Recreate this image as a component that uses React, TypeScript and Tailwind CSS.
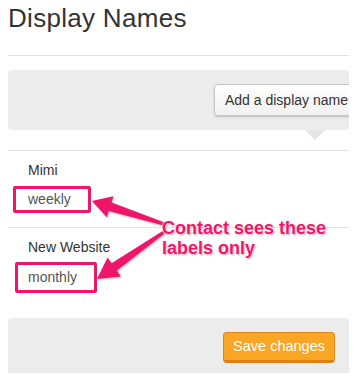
import React from 'react';

const PINK = '#ef156b';

// builds a tapered arrow polygon from tail to tip
function arrowPoints(
  tx: number, ty: number, hx: number, hy: number,
  headLen: number, headW: number, w0: number, w1: number
) {
  const dx = hx - tx;
  const dy = hy - ty;
  const len = Math.sqrt(dx * dx + dy * dy);
  const ux = dx / len;
  const uy = dy / len;
  const nx = -uy;
  const ny = ux;
  const bx = hx - ux * headLen;
  const by = hy - uy * headLen;
  const pts = [
    [tx + (nx * w0) / 2, ty + (ny * w0) / 2],
    [bx + (nx * w1) / 2, by + (ny * w1) / 2],
    [bx + (nx * headW) / 2, by + (ny * headW) / 2],
    [hx, hy],
    [bx - (nx * headW) / 2, by - (ny * headW) / 2],
    [bx - (nx * w1) / 2, by - (ny * w1) / 2],
    [tx - (nx * w0) / 2, ty - (ny * w0) / 2],
  ];
  return pts.map((p) => `${p[0].toFixed(1)},${p[1].toFixed(1)}`).join(' ');
}

export default function App() {
  return (
    <div className="relative w-[361px] h-[388px] bg-white overflow-hidden font-['Liberation_Sans',Arial,sans-serif]">
      <div className="ml-2 w-[341px] overflow-hidden">
        {/* Title */}
        <h1 className="pt-[3px] text-[26px] leading-[30px] tracking-[0.3px] text-[#333]">
          Display Names
        </h1>
        <div className="mt-[22px] border-t border-[#e3e3e3]" />

        {/* Add panel */}
        <div className="mt-[14px] h-[60px] rounded-[4px] bg-[#ececec] pl-[206px] pt-[14px]">
          <button className="h-[32px] whitespace-nowrap rounded-[4px] border border-[#c6c6c6] bg-gradient-to-b from-white to-[#f1f1f1] pl-[10px] pr-[12px] text-[14px] text-[#333] shadow-[0_1px_2px_rgba(0,0,0,0.2)]">
            Add a display name
          </button>
        </div>
        <div className="ml-[297px] h-0 w-0 border-l-[10px] border-r-[10px] border-t-[10px] border-l-transparent border-r-transparent border-t-[#e4e4e4]" />

        {/* Rows */}
        <div className="mt-[10px] border-t border-[#e3e3e3]">
          <div className="pl-[20px] pt-[9px] text-[14px] leading-[20px] text-[#333]">Mimi</div>
          <div className="mt-[6px] ml-[5px] flex h-[27px] w-[78px] items-center rounded-[2px] border-[3px] border-[#ef156b] pl-[12px] text-[14px] text-[#555]">
            weekly
          </div>
        </div>
        <div className="mt-[14px] border-t border-[#e3e3e3]">
          <div className="pl-[20px] pt-[9px] text-[14px] leading-[20px] text-[#333]">New Website</div>
          <div className="mt-[5px] ml-[7px] flex h-[31px] w-[82px] items-center rounded-[2px] border-[3px] border-[#ef156b] pl-[10px] text-[14px] text-[#555]">
            monthly
          </div>
        </div>

        {/* Footer */}
        <div className="mt-[25px] flex h-[55px] justify-end rounded-t-[4px] bg-[#ececec] pr-[14px] pt-[14px]">
          <button className="h-[31px] rounded-[4px] border border-[#e0861a] border-b-[3px] border-b-[#e27f12] bg-[#f9a624] px-[9px] text-[14.5px] text-white">
            Save changes
          </button>
        </div>
      </div>

      {/* Annotation */}
      <svg
        className="pointer-events-none absolute left-0 top-0 drop-shadow-[1px_1px_1px_rgba(0,0,0,0.3)]"
        width={361}
        height={388}
      >
        <polygon points={arrowPoints(164, 224, 92, 201, 19, 22, 3, 9)} fill={PINK} />
        <polygon points={arrowPoints(164, 232, 97, 279, 21, 23, 3, 9)} fill={PINK} />
      </svg>
      <div className="absolute left-[162px] top-[218px] text-[18px] font-bold leading-[20px] text-[#ef156b] [text-shadow:0_0_2px_#fff,0_0_2px_#fff,1px_1px_2px_rgba(0,0,0,0.45)]">
        Contact sees these
        <br />
        labels only
      </div>
    </div>
  );
}
